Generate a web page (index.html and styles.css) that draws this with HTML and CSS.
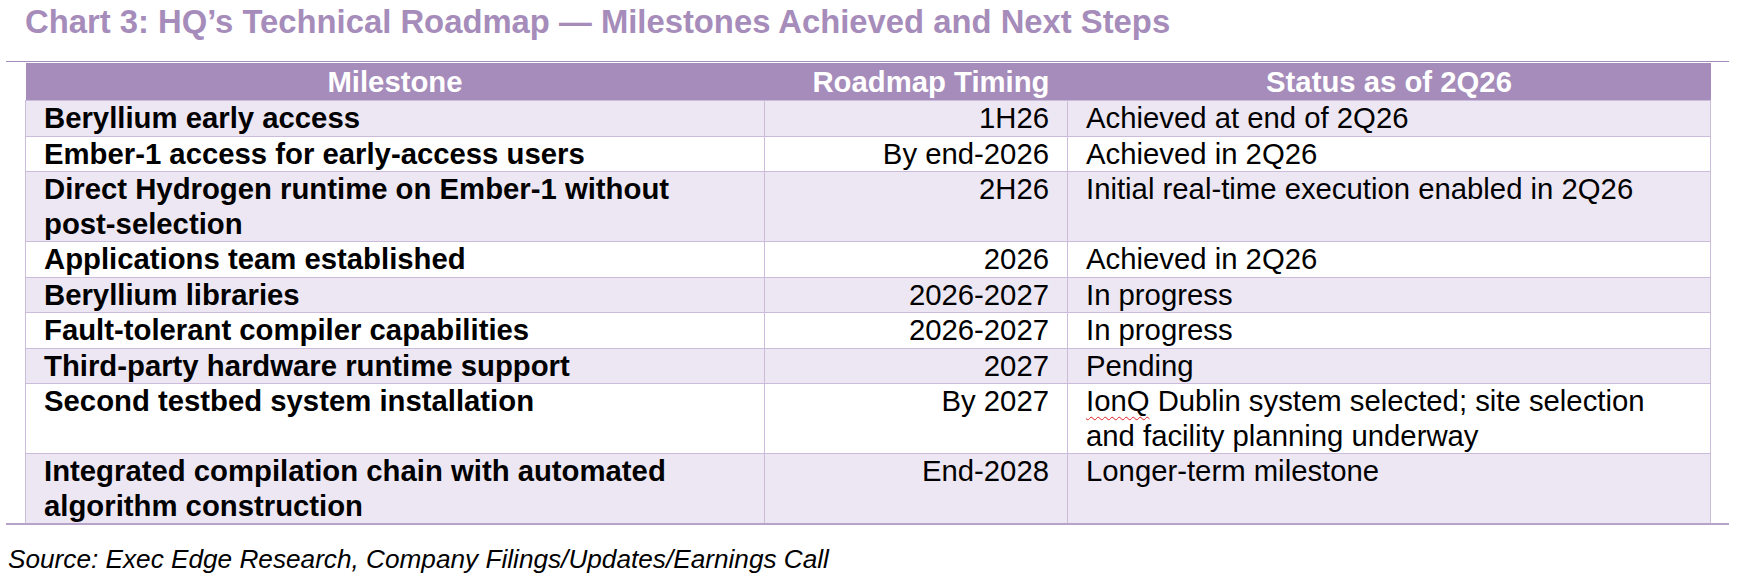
FILE: index.html
```html
<!DOCTYPE html>
<html lang="en">
<head>
<meta charset="utf-8">
<title>Chart 3: HQ’s Technical Roadmap</title>
<link rel="stylesheet" href="styles.css">
</head>
<body>
<div class="page">
  <h1 class="title">Chart 3: HQ’s Technical Roadmap — Milestones Achieved and Next Steps</h1>
  <div class="rule"></div>
  <table class="roadmap">
    <colgroup>
      <col class="c-milestone">
      <col class="c-timing">
      <col class="c-status">
    </colgroup>
    <thead>
      <tr>
        <th class="h-milestone">Milestone</th>
        <th class="h-timing">Roadmap Timing</th>
        <th class="h-status">Status as of 2Q26</th>
      </tr>
    </thead>
    <tbody>
      <tr class="alt">
        <td class="milestone">Beryllium early access</td>
        <td class="timing">1H26</td>
        <td class="status">Achieved at end of 2Q26</td>
      </tr>
      <tr>
        <td class="milestone">Ember-1 access for early-access users</td>
        <td class="timing">By end-2026</td>
        <td class="status">Achieved in 2Q26</td>
      </tr>
      <tr class="alt">
        <td class="milestone">Direct Hydrogen runtime on Ember-1 without<br>post-selection</td>
        <td class="timing">2H26</td>
        <td class="status">Initial real-time execution enabled in 2Q26</td>
      </tr>
      <tr>
        <td class="milestone">Applications team established</td>
        <td class="timing">2026</td>
        <td class="status">Achieved in 2Q26</td>
      </tr>
      <tr class="alt">
        <td class="milestone">Beryllium libraries</td>
        <td class="timing">2026-2027</td>
        <td class="status">In progress</td>
      </tr>
      <tr>
        <td class="milestone">Fault-tolerant compiler capabilities</td>
        <td class="timing">2026-2027</td>
        <td class="status">In progress</td>
      </tr>
      <tr class="alt">
        <td class="milestone">Third-party hardware runtime support</td>
        <td class="timing">2027</td>
        <td class="status">Pending</td>
      </tr>
      <tr>
        <td class="milestone">Second testbed system installation</td>
        <td class="timing">By 2027</td>
        <td class="status"><span class="spell">IonQ</span> Dublin system selected; site selection<br>and facility planning underway</td>
      </tr>
      <tr class="alt last">
        <td class="milestone">Integrated compilation chain with automated<br>algorithm construction</td>
        <td class="timing">End-2028</td>
        <td class="status">Longer-term milestone</td>
      </tr>
    </tbody>
  </table>
  <div class="rule bottom"></div>
  <p class="source">Source: Exec Edge Research, Company Filings/Updates/Earnings Call</p>
</div>
</body>
</html>
```

FILE: styles.css
```css
html, body {
  margin: 0;
  padding: 0;
  background: #ffffff;
}

.page {
  width: 1742px;
  font-family: "Liberation Sans", Arial, sans-serif;
  color: #000000;
}

.title {
  margin: 0 0 17px 0;
  padding-left: 25px;
  font-size: 32.8px;
  line-height: 44px;
  font-weight: bold;
  color: #a68cba;
  white-space: nowrap;
}

.rule {
  margin: 0 13px 0 6px;
  height: 0;
  border-top: 1px solid #a68cba;
}

.rule.bottom {
  border-top-width: 2px;
  border-top-color: #b7a3c9;
}

.roadmap {
  margin: 1px 0 0 25px;
  width: 1685px;
  border-collapse: collapse;
  table-layout: fixed;
  font-size: 29.3px;
}

.c-milestone { width: 739px; }
.c-timing { width: 303px; }
.c-status { width: 643px; }

.roadmap th {
  background: #a68cba;
  color: #ffffff;
  font-weight: bold;
  height: 37px;
  line-height: 37px;
  padding: 0 18px;
  white-space: nowrap;
}

.h-milestone { text-align: center; }
.h-timing { text-align: right; }
.h-status { text-align: center; }

.roadmap td {
  vertical-align: top;
  line-height: 34.5px;
  padding: 0 18px;
  border: 1px solid #cbbcdb;
  background: #ffffff;
  white-space: nowrap;
}

.roadmap tr.alt td {
  background: #ede7f3;
}

.roadmap tr.last td {
  border-bottom: 0;
}

.milestone {
  font-weight: bold;
  text-align: left;
}

.timing {
  text-align: right;
}

.status {
  text-align: left;
  padding-left: 20px;
}

.spell {
  text-decoration: underline wavy #e02020;
  text-decoration-thickness: 1px;
  text-underline-offset: 5px;
  text-decoration-skip-ink: none;
}

.source {
  margin: 0;
  padding: 19px 0 0 8px;
  font-size: 26.2px;
  line-height: 30px;
  font-style: italic;
  white-space: nowrap;
}
```
